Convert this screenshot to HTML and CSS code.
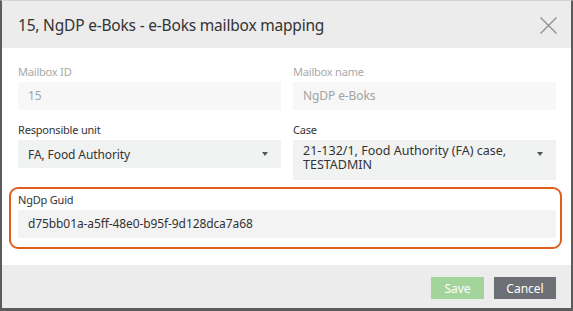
FILE: index.html
```html
<!DOCTYPE html>
<html lang="en">
<head>
<meta charset="utf-8">
<title>e-Boks mailbox mapping</title>
<link rel="stylesheet" href="styles.css">
</head>
<body>
<div class="dialog">
  <header class="dlg-head">
    <h1 class="dlg-title">15, NgDP e-Boks - e-Boks mailbox mapping</h1>
    <button class="dlg-close" type="button" aria-label="Close">
      <svg width="17" height="17" viewBox="0 0 17 17"><path d="M0.5 0.5 L16.5 16.5 M16.5 0.5 L0.5 16.5" stroke="#8c8c8c" stroke-width="1.2" fill="none"/></svg>
    </button>
  </header>
  <main class="dlg-body">
    <div class="form-grid">
      <div class="field">
        <label class="field-label is-disabled">Mailbox ID</label>
        <div class="input is-disabled">15</div>
      </div>
      <div class="field">
        <label class="field-label is-disabled">Mailbox name</label>
        <div class="input is-disabled">NgDP e-Boks</div>
      </div>
      <div class="field">
        <label class="field-label">Responsible unit</label>
        <div class="select"><span class="select-text">FA, Food Authority</span><span class="caret"></span></div>
      </div>
      <div class="field">
        <label class="field-label">Case</label>
        <div class="select select-multi"><span class="select-text"><span class="line">21-132/1, Food Authority (FA) case,</span><span class="line">TESTADMIN</span></span><span class="caret"></span></div>
      </div>
      <div class="field field-wide">
        <label class="field-label">NgDp Guid</label>
        <div class="input">d75bb01a-a5ff-48e0-b95f-9d128dca7a68</div>
        <div class="highlight"></div>
      </div>
    </div>
  </main>
  <footer class="dlg-foot">
    <button class="btn btn-save" type="button">Save</button>
    <button class="btn btn-cancel" type="button">Cancel</button>
  </footer>
</div>
</body>
</html>
```
FILE: styles.css
```css
* { box-sizing: border-box; }
html, body { margin: 0; padding: 0; background: #fff; }
body {
  font-family: "Noto Sans", "Open Sans", sans-serif;
  color: #333;
}
.dialog {
  width: 573px;
  height: 311px;
  border: 2px solid #5c5c5c;
  border-top: 1px solid #d4d4d4;
  border-bottom-width: 3px;
  display: flex;
  flex-direction: column;
  background: #fff;
}
.dlg-head {
  height: 47px;
  background: #ececec;
  display: flex;
  align-items: center;
  justify-content: space-between;
  padding: 0 14px 0 16px;
}
.dlg-title {
  margin: 0;
  font-size: 15.5px;
  letter-spacing: -0.2px;
  font-weight: 400;
  color: #333;
  padding-top: 1px;
}
.dlg-close {
  border: 0;
  background: none;
  padding: 0;
  width: 17px;
  height: 17px;
  display: block;
  margin-top: 1px;
}
.dlg-close svg { display: block; }
.dlg-body {
  flex: 1;
  padding: 16px 15px 0 16px;
}
.form-grid {
  display: grid;
  grid-template-columns: 263px 263px;
  column-gap: 12px;
  row-gap: 12px;
  align-items: start;
}
.field { position: relative; }
.field-wide { grid-column: 1 / 3; }
.field-label {
  display: block;
  font-size: 11px;
  letter-spacing: -0.2px;
  line-height: 16px;
  margin-bottom: 2px;
  color: #333;
}
.field-label.is-disabled { color: #a8a8a8; }
.input {
  height: 28px;
  background: #f2f3f2;
  font-size: 12px;
  letter-spacing: -0.1px;
  line-height: 28px;
  padding: 0 10px;
  color: #333;
}
.input.is-disabled {
  background: #f7f7f7;
  color: #a3a3a3;
}
.select {
  height: 28px;
  background: #f1f3f2;
  display: flex;
  align-items: center;
  justify-content: space-between;
  padding: 0 13px 0 10px;
  font-size: 12px;
  letter-spacing: -0.1px;
  color: #333;
}
.select-multi {
  height: 40px;
  align-items: flex-start;
  padding-top: 4px;
  font-size: 12.5px;
  letter-spacing: 0;
}
.select-multi .select-text { display: flex; flex-direction: column; }
.select-multi .line { display: block; line-height: 14px; }
.select-multi .caret { margin-top: 8px; }
.caret {
  width: 0;
  height: 0;
  border-left: 3.5px solid transparent;
  border-right: 3.5px solid transparent;
  border-top: 4px solid #555;
}
.highlight {
  position: absolute;
  left: -9px;
  top: -5px;
  right: -6px;
  bottom: -11px;
  border: 2px solid #df5f1d;
  border-radius: 9px;
  pointer-events: none;
}
.dlg-foot {
  height: 43px;
  background: #ececec;
  display: flex;
  justify-content: flex-end;
  align-items: flex-start;
  gap: 10px;
  padding: 12px 15px 0 0;
}
.btn {
  height: 22px;
  border: 0;
  color: #fff;
  font-family: "Noto Sans", "Open Sans", sans-serif;
  font-size: 12px;
  padding: 0;
}
.btn-save {
  width: 53px;
  background: #a3d49b;
}
.btn-cancel {
  width: 62px;
  background: #6c7074;
}
```
